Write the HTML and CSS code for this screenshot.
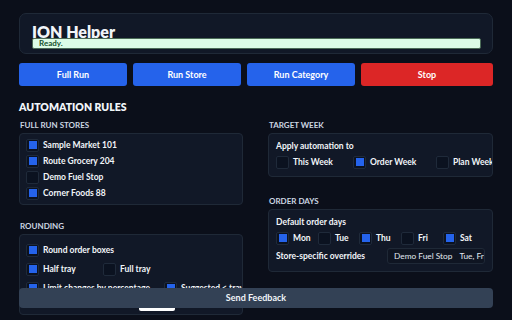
FILE: index.html
```html
<!DOCTYPE html>
<html lang="en">
<head>
    <meta charset="UTF-8">
    <meta name="viewport" content="width=device-width, initial-scale=1.0">
    <title>ION Helper</title>
    <link rel="stylesheet" href="styles.css">
</head>
<body>
    <!-- Header with status -->
    <header class="header">
        <h1>ION Helper</h1>
        <div class="status">Ready.</div>
    </header>

    <!-- Main actions -->
    <div class="actions">
        <button class="btn">Full Run</button>
        <button class="btn">Run Store</button>
        <button class="btn">Run Category</button>
        <button class="btn stop">Stop</button>
    </div>

    <h2>AUTOMATION RULES</h2>

    <div class="columns">
        <div class="col">
            <div class="section-title">FULL RUN STORES</div>
            <div class="card list">
                <label class="check"><span class="box on"></span>Sample Market 101</label>
                <label class="check"><span class="box on"></span>Route Grocery 204</label>
                <label class="check"><span class="box"></span>Demo Fuel Stop</label>
                <label class="check"><span class="box on"></span>Corner Foods 88</label>
            </div>

            <div class="section-title gap">ROUNDING</div>
            <div class="card rounding">
                <label class="check"><span class="box on"></span>Round order boxes</label>
                <div class="pair">
                    <label class="check"><span class="box on"></span>Half tray</label>
                    <label class="check"><span class="box"></span>Full tray</label>
                </div>
                <div class="pair wide">
                    <label class="check"><span class="box on"></span>Limit changes by percentage</label>
                    <label class="check"><span class="box on"></span>Suggested &lt; tray don't round</label>
                </div>
                <div class="field">
                    <span>Max change allowed (%):</span>
                    <input class="num" type="text" value="">
                </div>
            </div>
        </div>

        <div class="col">
            <div class="section-title">TARGET WEEK</div>
            <div class="card">
                <div class="card-label">Apply automation to</div>
                <div class="weeks">
                    <label class="check"><span class="box"></span>This Week</label>
                    <label class="check"><span class="box on"></span>Order Week</label>
                    <label class="check"><span class="box"></span>Plan Week</label>
                </div>
            </div>

            <div class="section-title gap2">ORDER DAYS</div>
            <div class="card">
                <div class="card-label">Default order days</div>
                <div class="days">
                    <label class="check"><span class="box on"></span>Mon</label>
                    <label class="check"><span class="box"></span>Tue</label>
                    <label class="check"><span class="box on"></span>Thu</label>
                    <label class="check"><span class="box"></span>Fri</label>
                    <label class="check"><span class="box on"></span>Sat</label>
                </div>
                <div class="overrides">
                    <span class="card-label">Store-specific overrides</span>
                    <div class="override-box">
                        <span>Demo Fuel Stop</span>
                        <span>Tue, Fri</span>
                    </div>
                </div>
            </div>
        </div>
    </div>

    <footer class="feedback">Send Feedback</footer>
</body>
</html>
```

FILE: styles.css
```css
body {
    font-family: Lato, "Noto Sans", sans-serif;
    background-color: #0b0f1a;
    color: #f1f5f9;
    margin: 0;
    padding: 13px 19px 40px 19px;
}
.header {
    background-color: #111827;
    border: 1px solid #1f2937;
    border-radius: 7px;
    padding: 9px 11px 4px 12px;
}
h1 {
    font-size: 16px;
    font-weight: 800;
    margin: 0;
    line-height: 17px;
    height: 15px;
}
.status {
    position: relative;
    background-color: #dcfce7;
    border: 1px solid #4b6b57;
    border-radius: 2px;
    color: #14532d;
    font-size: 8px;
    font-weight: bold;
    height: 9px;
    line-height: 9px;
    padding-left: 6px;
}
.actions {
    display: grid;
    grid-template-columns: 108px 108px 108px 1fr;
    gap: 6px;
    margin-top: 9px;
}
.btn {
    font-family: inherit;
    background-color: #2563eb;
    color: white;
    border: none;
    border-radius: 3px;
    height: 23px;
    font-size: 9px;
    font-weight: bold;
}
.stop {
    background-color: #dc2626;
}
h2 {
    font-size: 10.5px;
    font-weight: 800;
    margin: 14px 0 5px 0;
    line-height: 14px;
}
.columns {
    display: grid;
    grid-template-columns: 224px 225px;
    gap: 25px;
}
.section-title {
    font-size: 8px;
    font-weight: bold;
    color: #cbd5e1;
    line-height: 10px;
    margin-bottom: 3px;
    padding-left: 1px;
}
.col .section-title:first-child {
    margin-top: 1px;
}
.gap {
    margin-top: 16px;
}
.gap2 {
    margin-top: 19px;
}
.card {
    background-color: #111827;
    border: 1px solid #1f2937;
    border-radius: 4px;
    padding: 7px;
    overflow: hidden;
}
.list {
    display: flex;
    flex-direction: column;
    gap: 2px;
    padding: 4px 6px;
}
.check {
    display: flex;
    align-items: center;
    gap: 4px;
    font-size: 8.5px;
    font-weight: bold;
    white-space: nowrap;
    height: 14px;
}
.box {
    width: 13px;
    height: 13px;
    flex-shrink: 0;
    border: 1px solid #1f2a3a;
    border-radius: 2px;
    background-color: #0b1220;
    box-sizing: border-box;
    display: flex;
    align-items: center;
    justify-content: center;
}
.box.on::after {
    content: "";
    width: 8px;
    height: 8px;
    background-color: #2563eb;
}
.rounding {
    display: flex;
    flex-direction: column;
    gap: 5px;
    padding: 8px 6px 3px 6px;
}
.pair {
    display: grid;
    grid-template-columns: 77px 1fr;
}
.pair.wide {
    grid-template-columns: 138px 1fr;
}
.field {
    display: flex;
    align-items: center;
    gap: 20px;
    font-size: 8.5px;
    font-weight: bold;
    height: 16px;
    margin-top: -5px;
}
.num {
    width: 36px;
    height: 14px;
    border: none;
    border-radius: 2px;
    background-color: #ffffff;
    padding: 0;
    margin-top: 2px;
}
.card-label {
    font-size: 8.5px;
    font-weight: bold;
    line-height: 11px;
}
.weeks {
    display: grid;
    grid-template-columns: 77px 83px 1fr;
    margin-top: 3px;
}
.days {
    display: grid;
    grid-template-columns: 42px 41px 42px 42px 1fr;
    margin-top: 3px;
}
.overrides {
    display: flex;
    align-items: center;
    justify-content: space-between;
    margin-top: 3px;
}
.override-box {
    display: flex;
    gap: 7px;
    border: 1px solid #1f2937;
    border-radius: 3px;
    background-color: #0f1522;
    padding: 2px 0 2px 6px;
    width: 90px;
    font-size: 8.3px;
    color: #e2e8f0;
    white-space: nowrap;
    overflow: hidden;
}
.feedback {
    position: fixed;
    left: 19px;
    right: 19px;
    bottom: 12px;
    height: 20px;
    line-height: 20px;
    background-color: #334155;
    border-radius: 4px;
    text-align: center;
    font-size: 9px;
    font-weight: bold;
}
```
